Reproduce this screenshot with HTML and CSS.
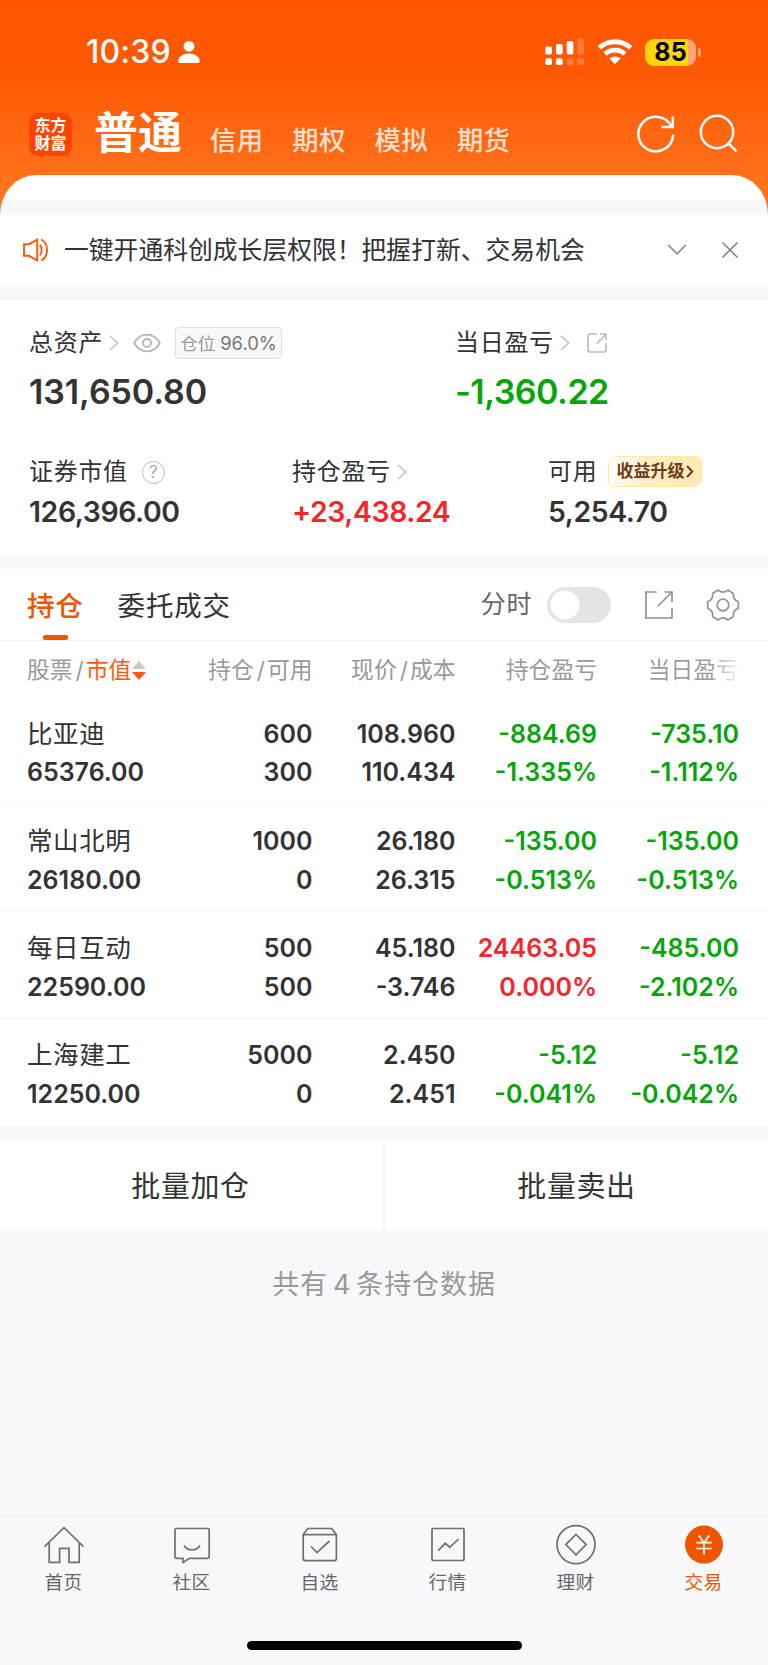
FILE: index.html
```html
<!DOCTYPE html>
<html lang="zh-CN">
<head>
  <meta charset="UTF-8">
  <meta name="viewport" content="width=device-width, initial-scale=1.0">
  <title>交易</title>
  <link rel="stylesheet" href="styles.css">
</head>
<body>
  <header class="header">
    <div class="status-bar">
      <span class="time">10:39</span>
      <svg class="person" width="22" height="24" viewBox="0 0 22 24" fill="#fff">
        <circle cx="11" cy="6.3" r="5.4"/>
        <path d="M0.3 21.5C0.3 17 5 13.6 11 13.6S21.7 17 21.7 21.5Q21.7 23 20 23H2Q0.3 23 0.3 21.5z"/>
      </svg>
      <svg class="signal" width="40" height="28" viewBox="0 0 40 28" fill="#fff">
        <rect x="0.3" y="8.5" width="6.7" height="8" rx="1.8"/>
        <rect x="11" y="6" width="6.7" height="10.5" rx="1.8"/>
        <rect x="21.7" y="3" width="6.7" height="13.5" rx="1.8"/>
        <rect x="32.3" y="0.3" width="6.7" height="16.2" rx="1.8" opacity="0.22"/>
        <rect x="0.3" y="20.3" width="6.7" height="6.8" rx="1.8"/>
        <rect x="11" y="20.3" width="6.7" height="6.8" rx="1.8"/>
        <rect x="21.7" y="20.3" width="6.7" height="6.8" rx="1.8" opacity="0.22"/>
        <rect x="32.3" y="20.3" width="6.7" height="6.8" rx="1.8" opacity="0.22"/>
      </svg>
      <svg class="wifi" width="36" height="26" viewBox="0 0 36 26" fill="none" stroke="#fff" stroke-width="4.8">
        <path d="M2.2 8.8C11.2 0.7 24.8 0.7 33.8 8.8"/>
        <path d="M8.1 15C13.8 9.9 22.2 9.9 27.9 15"/>
        <path d="M18 25.2L12.4 19.6C15.6 16.9 20.4 16.9 23.6 19.6z" fill="#fff" stroke="none"/>
      </svg>
      <div class="battery"><span>85</span></div>
      <i class="battery-cap"></i>
    </div>
    <nav class="top-nav">
      <div class="logo"><span>东方</span><span>财富</span></div>
      <span class="nav-main">普通</span>
      <span class="nav-item">信用</span>
      <span class="nav-item">期权</span>
      <span class="nav-item">模拟</span>
      <span class="nav-item">期货</span>
      <svg class="refresh" width="40" height="40" viewBox="0 0 40 40" fill="none" stroke="#fff" stroke-width="2.5">
        <path d="M37.1 20.6A17.4 17.4 0 1 1 33.4 9.3L36 12.8"/>
        <path d="M36.8 2.6V13H25.4"/>
      </svg>
      <svg class="search" width="40" height="40" viewBox="0 0 40 40" fill="none" stroke="#fff" stroke-width="2.5">
        <circle cx="18" cy="18" r="16.2"/>
        <path d="M29.5 29.5L37.5 37.3"/>
      </svg>
    </nav>
  </header>

  <main class="sheet">
    <div class="notice">
      <svg class="horn" width="26" height="24" viewBox="0 0 26 24" fill="none" stroke="#ff5a0c" stroke-width="1.9">
        <path d="M1 6.2H6L14.2 1.6V22.4L6 17.8H1z"/>
        <path d="M16.6 6.8C19.3 9.2 19.3 14.8 16.6 17.2"/>
        <path d="M18.2 1.5C26 5.4 26 18.6 18.2 22.5"/>
      </svg>
      <span class="notice-text">一键开通科创成长层权限！把握打新、交易机会</span>
      <svg class="down" width="20" height="12" viewBox="0 0 20 12" fill="none" stroke="#8a8a8a" stroke-width="1.7">
        <path d="M1.2 1L10 9.8L18.8 1"/>
      </svg>
      <svg class="close" width="18" height="18" viewBox="0 0 18 18" fill="none" stroke="#8a8a8a" stroke-width="1.7">
        <path d="M1.5 1.5L16.5 16.5M16.5 1.5L1.5 16.5"/>
      </svg>
    </div>

    <section class="assets">
      <div class="assets-top">
        <div class="asset">
          <div class="label">
            <span>总资产</span>
            <svg class="arrow" width="10" height="16" viewBox="0 0 10 16"><path d="M1 1L8.5 8L1 15"/></svg>
            <svg class="eye" width="28" height="20" viewBox="0 0 28 20" fill="none" stroke="#b4b4b4" stroke-width="1.8">
              <path d="M1.2 10C7.5-1.2 20.5-1.2 26.8 10C20.5 21.2 7.5 21.2 1.2 10z"/>
              <circle cx="14" cy="10" r="4"/>
            </svg>
            <span class="position">仓位 <b>96.0%</b></span>
          </div>
          <div class="total">131,650.80</div>
        </div>
        <div class="asset">
          <div class="label">
            <span>当日盈亏</span>
            <svg class="arrow" width="10" height="16" viewBox="0 0 10 16"><path d="M1 1L8.5 8L1 15"/></svg>
            <svg class="share-small" width="22" height="22" viewBox="0 0 22 22" fill="none" stroke="#bcbcbc" stroke-width="1.7">
              <path d="M11 2H4.5Q2 2 2 4.5V17.5Q2 20 4.5 20H17.5Q20 20 20 17.5V11"/>
              <path d="M14 2H20V8M20 2L11 11.5"/>
            </svg>
          </div>
          <div class="total green">-1,360.22</div>
        </div>
      </div>
      <div class="assets-bottom">
        <div class="asset">
          <div class="label">
            <span>证券市值</span>
            <span class="help">?</span>
          </div>
          <div class="amount">126,396.00</div>
        </div>
        <div class="asset">
          <div class="label">
            <span>持仓盈亏</span>
            <svg class="arrow" width="10" height="16" viewBox="0 0 10 16"><path d="M1 1L8.5 8L1 15"/></svg>
          </div>
          <div class="amount red">+23,438.24</div>
        </div>
        <div class="asset">
          <div class="label">
            <span>可用</span>
            <span class="upgrade">收益升级<svg width="8" height="13" viewBox="0 0 8 13" fill="none" stroke="#6b3d1e" stroke-width="2"><path d="M1 1L6.3 6.5L1 12"/></svg></span>
          </div>
          <div class="amount">5,254.70</div>
        </div>
      </div>
    </section>

    <section class="holdings">
      <div class="tabs">
        <span class="tab active">持仓</span>
        <span class="tab">委托成交</span>
        <span class="minute">分时</span>
        <span class="switch"></span>
        <svg class="share" width="30" height="30" viewBox="0 0 30 30" fill="none" stroke="#929292" stroke-width="1.7">
          <path d="M12.5 2H2V28H28V18"/>
          <path d="M20.5 2H28V12M28 2L14 16"/>
        </svg>
        <svg class="gear" width="34" height="34" viewBox="0 0 34 34" fill="none" stroke="#929292" stroke-width="1.7" stroke-linejoin="round">
          <path d="M32.3 20.3Q26.4 22.4 27.4 28.6L21.8 31.9Q17 27.8 12.2 31.9L6.6 28.6Q7.6 22.4 1.7 20.3V13.7Q7.6 11.6 6.6 5.4L12.2 2.1Q17 6.2 21.8 2.1L27.4 5.4Q26.4 11.6 32.3 13.7z"/>
          <circle cx="17" cy="17" r="5.8"/>
        </svg>
      </div>

      <div class="row table-head">
        <span>股票<i>/</i><em>市值</em><svg width="14" height="19" viewBox="0 0 14 19"><path d="M7 0L14 8H0z" fill="#c8c8c8"/><path d="M0 11H14L7 19z" fill="#ff5a0c"/></svg></span>
        <span>持仓<i>/</i>可用</span>
        <span>现价<i>/</i>成本</span>
        <span>持仓盈亏</span>
        <span class="fade">当日盈亏</span>
      </div>

      <div class="row stock">
        <div><p class="name">比亚迪</p><p>65376.00</p></div>
        <div><p>600</p><p>300</p></div>
        <div><p>108.960</p><p>110.434</p></div>
        <div class="green"><p>-884.69</p><p>-1.335%</p></div>
        <div class="green"><p>-735.10</p><p>-1.112%</p></div>
      </div>
      <div class="row stock">
        <div><p class="name">常山北明</p><p>26180.00</p></div>
        <div><p>1000</p><p>0</p></div>
        <div><p>26.180</p><p>26.315</p></div>
        <div class="green"><p>-135.00</p><p>-0.513%</p></div>
        <div class="green"><p>-135.00</p><p>-0.513%</p></div>
      </div>
      <div class="row stock">
        <div><p class="name">每日互动</p><p>22590.00</p></div>
        <div><p>500</p><p>500</p></div>
        <div><p>45.180</p><p>-3.746</p></div>
        <div class="red"><p>24463.05</p><p>0.000%</p></div>
        <div class="green"><p>-485.00</p><p>-2.102%</p></div>
      </div>
      <div class="row stock">
        <div><p class="name">上海建工</p><p>12250.00</p></div>
        <div><p>5000</p><p>0</p></div>
        <div><p>2.450</p><p>2.451</p></div>
        <div class="green"><p>-5.12</p><p>-0.041%</p></div>
        <div class="green"><p>-5.12</p><p>-0.042%</p></div>
      </div>
    </section>

    <div class="batch">
      <button>批量加仓</button>
      <button>批量卖出</button>
    </div>
    <p class="summary">共有 4 条持仓数据</p>
  </main>

  <footer class="tab-bar">
    <div class="tab-list">
      <a class="tab-link">
        <svg width="42" height="42" viewBox="0 0 42 42"><path d="M1.5 22.6L21 3.6L40.5 22.6M6.2 18.5V38.4H16.6V24.4H26V38.4H36.2V18.5"/></svg>
        <span>首页</span>
      </a>
      <a class="tab-link">
        <svg width="42" height="42" viewBox="0 0 42 42"><path d="M5.8 4.5H36.4Q38.2 4.5 38.2 6.3V32.5Q38.2 34.3 36.4 34.3H18.5L12 38.4V34.3H5.8Q4 34.3 4 32.5V6.3Q4 4.5 5.8 4.5z"/><path d="M13 21.5C17 27.5 25 27.5 29 21.5"/></svg>
        <span>社区</span>
      </a>
      <a class="tab-link">
        <svg width="42" height="42" viewBox="0 0 42 42"><path d="M4.2 10.6L8.7 4.5H32.6L37.4 10.6V34.6Q37.4 36.6 35.4 36.6H6.2Q4.2 36.6 4.2 34.6zM4.2 10.6H37.4M12 22.5L17.9 28.6L30.5 17"/></svg>
        <span>自选</span>
      </a>
      <a class="tab-link">
        <svg width="42" height="42" viewBox="0 0 42 42"><rect x="5" y="4.5" width="32" height="32" rx="1"/><path d="M11.2 26.6L18.3 19.3L22.8 23.4L31.6 15"/></svg>
        <span>行情</span>
      </a>
      <a class="tab-link">
        <svg width="42" height="42" viewBox="0 0 42 42"><circle cx="21" cy="20.6" r="19"/><path d="M21 10.5L31.2 20.6L21 30.8L10.8 20.6z"/></svg>
        <span>理财</span>
      </a>
      <a class="tab-link current">
        <svg width="42" height="42" viewBox="0 0 42 42"><circle cx="21" cy="20.6" r="19" fill="#ee5500" stroke="none"/><path d="M15.8 11.5L21 18.7L26.2 11.5M21 18.7V30.5M13.4 18.7H28.6M13.4 24.5H28.6" stroke="#fff"/></svg>
        <span>交易</span>
      </a>
    </div>
    <div class="home-indicator"></div>
  </footer>
</body>
</html>
```
FILE: styles.css
```css
* {
  box-sizing: border-box;
}

body {
  margin: 0;
  height: 1665px;
  display: flex;
  flex-direction: column;
  background: linear-gradient(#ff5500 0, #ff5803 72px, #ff7019 175px, #ff7a28 220px, #f7f8fb 221px);
  font-family: Inter, "Noto Sans CJK SC", sans-serif;
  color: #333;
}

p {
  margin: 0;
}

svg {
  flex: none;
  display: block;
}

.green {
  color: #06a50a;
}

.red {
  color: #f9232b;
}

/* Header */
.header {
  height: 175px;
}

.status-bar {
  height: 104px;
  padding: 0 67px 0 86px;
  display: flex;
  align-items: center;
  color: #fff;
}

.time {
  width: 92px;
  font-size: 32px;
  font-weight: 500;
  letter-spacing: 0.2px;
  line-height: 42px;
  white-space: nowrap;
}

.signal {
  margin-left: 345px;
}

.wifi {
  margin-left: 12px;
}

.battery {
  width: 51px;
  height: 27px;
  margin-left: 12px;
  border-radius: 9px;
  background: linear-gradient(90deg, #ffd60a 43px, #ffa67c 43px);
  color: #000;
  font-size: 25px;
  font-weight: 700;
  line-height: 27px;
  text-align: center;
}

.battery-cap {
  width: 3px;
  height: 9px;
  margin-left: 2px;
  border-radius: 0 4px 4px 0;
  background: #ffa67c;
}

.top-nav {
  height: 71px;
  padding-left: 29px;
  display: flex;
  color: #fff;
}

.logo {
  width: 43px;
  height: 43px;
  margin: 9px 22px 0 0;
  padding-top: 4px;
  border-radius: 9px;
  background: #ff4400;
  display: flex;
  flex-direction: column;
  align-items: center;
  font-size: 16px;
  font-weight: 700;
  line-height: 17.5px;
}

.nav-main {
  width: 116px;
  margin-top: 4px;
  font-size: 44px;
  font-weight: 600;
  line-height: 50px;
}

.nav-item {
  width: 82.3px;
  margin-top: 17px;
  font-size: 26.3px;
  letter-spacing: 0.4px;
  line-height: 40px;
  color: #ffe0d0;
  font-weight: 500;
}

.refresh {
  margin: 10px 0 0 97px;
}

.search {
  margin: 10px 0 0 23px;
}

/* White sheet */
.sheet {
  flex: 1;
  padding-top: 25px;
  border-radius: 36px 36px 0 0 / 40px 40px 0 0;
  background: linear-gradient(#fff 25px, #f7f8fb 25px);
}

.notice {
  height: 71px;
  margin-top: 14px;
  padding: 0 29px 0 23px;
  background: #fff;
  display: flex;
  align-items: center;
}

.notice-text {
  flex: 1;
  margin-left: 15px;
  font-size: 24.8px;
  line-height: 40px;
}

.close {
  margin-left: 34px;
}

/* Assets */
.assets {
  height: 255px;
  margin-top: 15px;
  padding: 23px 29px 0;
  background: #fff;
}

.assets-top {
  height: 129px;
  display: grid;
  grid-template-columns: 426px 1fr;
}

.assets-bottom {
  display: grid;
  grid-template-columns: 263px 256px 1fr;
}

.label {
  height: 40px;
  display: flex;
  align-items: center;
  font-size: 24px;
  letter-spacing: 0.7px;
  line-height: 40px;
  white-space: nowrap;
}

.arrow {
  margin-left: 6px;
  fill: none;
  stroke: #c4c4c4;
  stroke-width: 1.7;
}

.eye {
  margin-left: 14px;
}

.position {
  width: 107px;
  height: 32px;
  margin-left: 14px;
  border: 1px solid #e0e0e3;
  border-radius: 4px;
  background: #f7f8fb;
  color: #999;
  font-size: 17.5px;
  letter-spacing: 0;
  line-height: 31px;
  text-align: center;
}

.position b {
  font-size: 18.4px;
  font-weight: 400;
  color: #777;
}

.share-small {
  margin-left: 16px;
}

.total {
  font-size: 34px;
  font-weight: 600;
  letter-spacing: -0.1px;
  line-height: 58px;
}

.total.green {
  letter-spacing: -0.5px;
}

.amount {
  font-size: 28.4px;
  font-weight: 600;
  letter-spacing: -0.4px;
  line-height: 40px;
}

.help {
  width: 23px;
  height: 23px;
  margin-left: 14px;
  border: 1.5px solid #bbb;
  border-radius: 50%;
  color: #aaa;
  font-size: 17px;
  letter-spacing: 0;
  line-height: 20px;
  text-align: center;
}

.upgrade {
  width: 94px;
  height: 31px;
  margin: 0 0 2px 11px;
  display: flex;
  align-items: center;
  justify-content: center;
  gap: 2px;
  border: 1px solid #fdeb9c;
  border-radius: 9px 5px 9px 5px;
  background: linear-gradient(100deg, #fff, #ffeec4 40%, #ffeab4);
  color: #6b3d1e;
  font-size: 17px;
  font-weight: 700;
  letter-spacing: 0;
}

/* Holdings */
.holdings {
  margin-top: 14px;
  background: #fff;
}

.tabs {
  height: 72px;
  padding: 0 28px 0 27px;
  border-bottom: 1px solid #f0f0f2;
  display: flex;
  align-items: center;
}

.tab {
  height: 71px;
  font-size: 27.5px;
  letter-spacing: 0.8px;
  line-height: 74px;
}

.tab.active {
  margin-right: 34px;
  color: #ee5500;
  font-weight: 500;
}

.tab.active::after {
  content: "";
  display: block;
  width: 25px;
  height: 5px;
  margin: -8px 0 0 16px;
  border-radius: 2px;
  background: #ee5500;
}

.minute {
  margin-left: auto;
  font-size: 25px;
  letter-spacing: 0.6px;
  line-height: 36px;
  padding-bottom: 1px;
  color: #666;
}

.switch {
  width: 64px;
  height: 36px;
  margin-left: 15px;
  border-radius: 18px;
  background: radial-gradient(circle at 18px 18px, #fff 14px, #e4e4e6 15px);
}

.share {
  margin-left: 33px;
}

.gear {
  margin-left: 32px;
}

.row {
  display: grid;
  grid-template-columns: 149px 136.5px 143px 141.5px 142px;
  padding-left: 27px;
  text-align: right;
}

.row > :first-child {
  text-align: left;
}

.table-head {
  height: 56.5px;
  font-size: 22.8px;
  line-height: 58px;
  color: #999;
  white-space: nowrap;
}

.table-head i {
  margin: 0 2px 0 3px;
  font-style: normal;
}

.table-head em {
  font-style: normal;
  color: #ff5a0c;
}

.table-head svg {
  display: inline-block;
  margin-left: 1px;
  vertical-align: -2px;
}

.fade {
  background: linear-gradient(90deg, #999 0 114px, #fff 145px);
  background-clip: text;
  -webkit-background-clip: text;
  color: transparent;
}

.stock {
  height: 107.3px;
  padding-top: 17px;
  border-bottom: 1.5px solid #f5f5f7;
  font-size: 25px;
  font-weight: 600;
  line-height: 38.9px;
}

.stock .name {
  font-size: 25.5px;
  font-weight: 400;
  letter-spacing: 0.6px;
}

/* Batch buttons */
.batch {
  height: 89px;
  margin-top: 14px;
  display: grid;
  grid-template-columns: 1fr 1fr;
  gap: 4px;
}

.batch button {
  border: none;
  padding: 0 1px 2px 0;
  background: #fff;
  color: #333;
  font-family: inherit;
  font-size: 29px;
  letter-spacing: 0.6px;
}

.summary {
  margin-top: 34px;
  font-size: 27px;
  letter-spacing: 0.9px;
  word-spacing: -3.5px;
  line-height: 42px;
  color: #999;
  text-align: center;
}

/* Bottom bar */
.tab-bar {
  height: 149px;
  border-top: 1px solid #e9eaed;
  background: #f8f8fb;
}

.tab-list {
  height: 124px;
  padding-top: 7px;
  display: grid;
  grid-template-columns: repeat(6, 1fr);
}

.tab-link {
  display: flex;
  flex-direction: column;
  align-items: center;
  color: #666;
  font-size: 18.6px;
  letter-spacing: 0.5px;
  line-height: 32px;
}

.tab-link span {
  padding-right: 1px;
}

.tab-link svg {
  fill: none;
  stroke: #707070;
  stroke-width: 1.7;
}

.tab-link.current {
  color: #ee5500;
}

.home-indicator {
  width: 275px;
  height: 9px;
  margin: 0 auto;
  border-radius: 5px;
  background: #000;
}
```
